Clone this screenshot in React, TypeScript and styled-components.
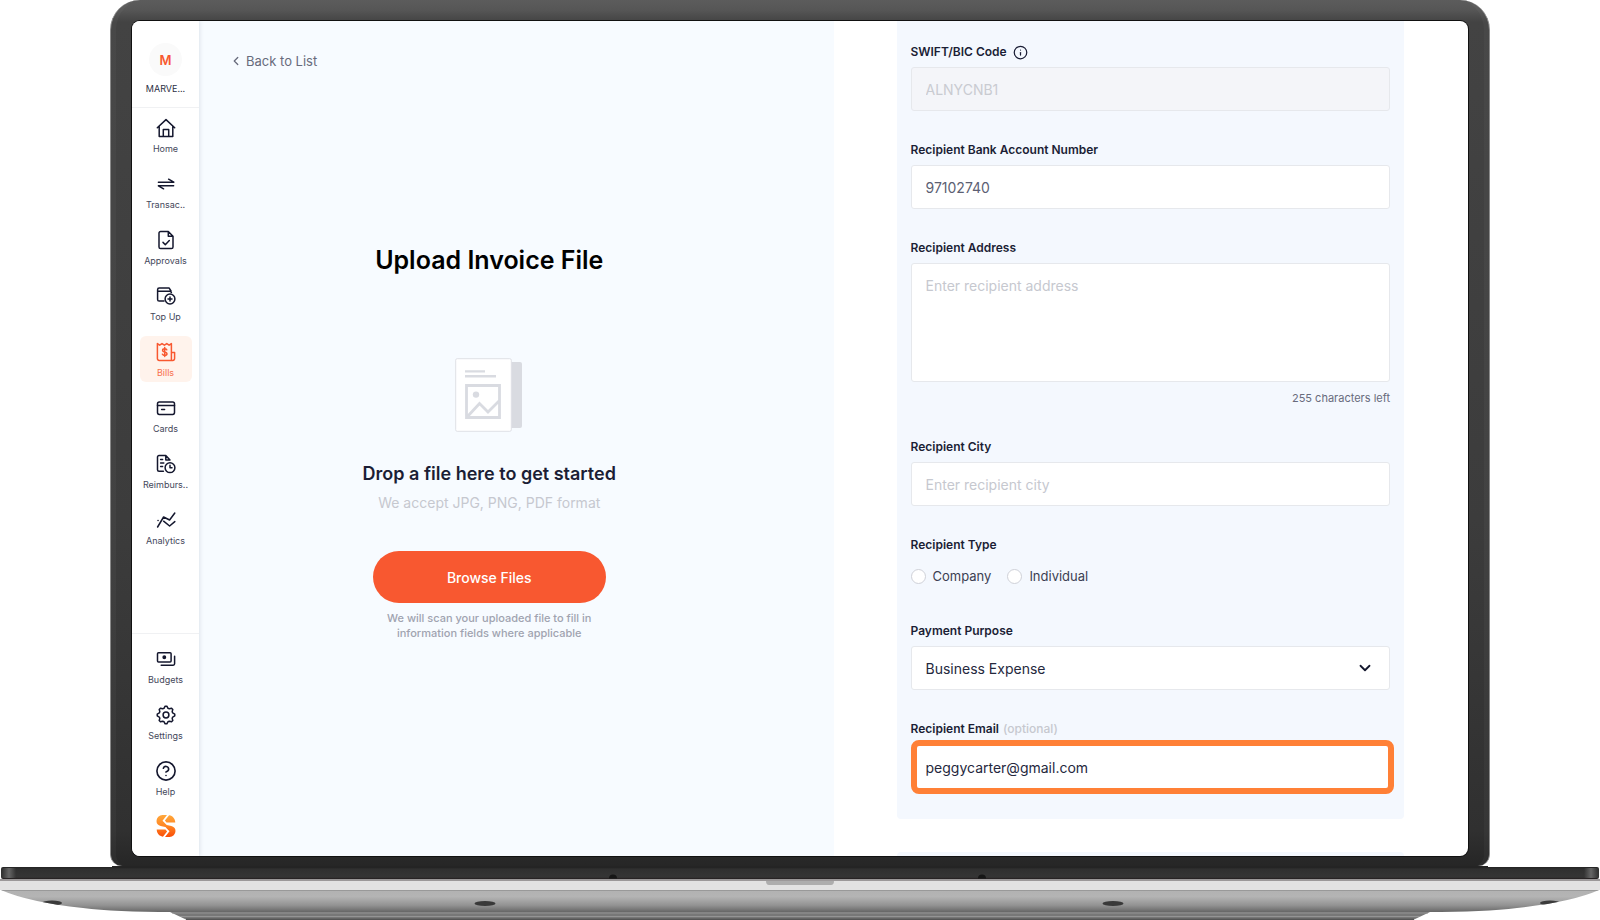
import React from "react";
import styled, { createGlobalStyle } from "styled-components";
import { ChevronDown, ChevronLeft, CircleHelp, Info } from "lucide-react";

const GlobalStyle = createGlobalStyle`
  *, *::before, *::after { box-sizing: border-box; }
  body { margin: 0; background: #fff; color: #14172e; }
  body, button, input, textarea, select { font-family: Inter, "Liberation Sans", sans-serif; }
`;

const Page = styled.div`
  display: flex;
  flex-direction: column;
  min-height: 100vh;
`;

const Lid = styled.div`
  flex: 1;
  display: flex;
  margin: 0 110px;
  padding: 21px 21px 10px;
  border: solid #8a8a8a;
  border-width: 0 1px;
  border-radius: 30px 30px 12px 12px;
  background: linear-gradient(#5c5c5c 0, #565656 10px, #434343 22px, #3c3c3c 60%, #303030 96%, #262626);
  box-shadow: inset 6px 0 0 -1px rgba(255, 255, 255, 0.03), inset -6px 0 0 -1px rgba(255, 255, 255, 0.03);
`;

const Screen = styled.div`
  flex: 1;
  display: grid;
  grid-template-columns: 67px minmax(0, 1fr) minmax(0, 1fr);
  border-radius: 8px;
  overflow: hidden;
  background: #fff;
  box-shadow: 0 0 0 1px #111;
`;

const Sidebar = styled.nav`
  display: flex;
  flex-direction: column;
  background: #fff;
  box-shadow: 1px 0 4px rgba(40, 60, 90, 0.12);
  z-index: 1;
`;

const Account = styled.div`
  display: flex;
  flex-direction: column;
  align-items: center;
  gap: 7px;
  height: 87px;
  padding-top: 22px;
  border-bottom: 1px solid #f0f1f3;
  color: #2c2f44;
  font-size: 9px;
  line-height: 12px;
`;

const Avatar = styled.span`
  display: grid;
  place-items: center;
  width: 33px;
  height: 33px;
  border-radius: 50%;
  background: #fafafa;
  color: #f85830;
  font-size: 13px;
  font-weight: 600;
`;

const NavGroup = styled.div<{ $bottom?: boolean }>`
  display: flex;
  flex-direction: column;
  align-items: center;
  gap: 10px;
  padding-top: ${(p) => (p.$bottom ? 9 : 4)}px;
  margin-top: ${(p) => (p.$bottom ? "auto" : 0)};
  border-top: ${(p) => (p.$bottom ? "1px solid #f0f1f3" : "none")};
`;

const NavItem = styled.a<{ $active?: boolean }>`
  display: flex;
  flex-direction: column;
  align-items: center;
  gap: 5px;
  width: 52px;
  height: 46px;
  padding-top: 6px;
  border-radius: 6px;
  background: ${(p) => (p.$active ? "#fff3ec" : "transparent")};
  color: ${(p) => (p.$active ? "#f85830" : "#14172e")};
  font-size: 9px;
  line-height: 12px;
  text-decoration: none;
  white-space: nowrap;
`;

const NavText = styled.span<{ $active?: boolean }>`
  color: ${(p) => (p.$active ? "#f8714c" : "#44475a")};
`;

const LogoLink = styled.a`
  display: flex;
  height: 45px;
  padding-top: 4px;
`;

const Upload = styled.section`
  display: flex;
  flex-direction: column;
  padding: 30px 30px 0;
  background: #f7fbff;
`;

const BackLink = styled.a`
  display: flex;
  align-items: center;
  gap: 3px;
  align-self: flex-start;
  color: #686b7c;
  font-size: 13px;
  line-height: 20px;
  text-decoration: none;
`;

const DropZone = styled.div`
  display: flex;
  flex-direction: column;
  align-items: center;
  margin-right: 54px;
  padding-top: 172px;
  text-align: center;
`;

const Title = styled.h1`
  margin: 0 0 81px;
  color: #000;
  font-size: 25px;
  line-height: 34px;
  font-weight: 600;
`;

const DropHeading = styled.h2`
  margin: 28px 0 5px;
  font-size: 18px;
  line-height: 28px;
  font-weight: 600;
  color: #1b1e35;
`;

const Formats = styled.p`
  margin: 0 0 38px;
  color: #c6c8cf;
  font-size: 14px;
  line-height: 20px;
`;

const BrowseButton = styled.button`
  width: 233px;
  height: 52px;
  margin-bottom: 8px;
  border: 0;
  border-radius: 26px;
  background: #f85830;
  color: #fff;
  font-size: 14px;
  font-weight: 500;
`;

const ScanNote = styled.p`
  width: 230px;
  margin: 0;
  color: #a0a3b0;
  font-size: 11px;
  line-height: 15px;
  font-weight: 500;
`;

const FormColumn = styled.form`
  display: flex;
  flex-direction: column;
  gap: 33px;
  padding: 0 64px 0 63px;
`;

const Card = styled.div`
  display: flex;
  flex-direction: column;
  gap: 30px;
  padding: 22px 14px 25px;
  border-radius: 0 0 4px 4px;
  background: #f4f8fe;
`;

const NextCard = styled.div`
  flex: 1;
  border-radius: 6px 6px 0 0;
  background: #f4f8fe;
`;

const Field = styled.div`
  display: flex;
  flex-direction: column;
  gap: 6px;
`;

const TypeField = styled.fieldset`
  display: flex;
  flex-direction: column;
  gap: 6px;
  min-width: 0;
  margin: 0;
  padding: 0;
  border: 0;
`;

const Label = styled.label`
  display: flex;
  align-items: center;
  gap: 6px;
  color: #1b1e35;
  font-size: 12px;
  line-height: 18px;
  font-weight: 600;
`;

const TypeLabel = styled(Label).attrs({ as: "legend" })`
  padding: 0;
  margin-bottom: 6px;
`;

const Optional = styled.span`
  margin-left: -2px;
  color: #c6c8cf;
  font-weight: 500;
`;

const Input = styled.input`
  width: 100%;
  height: 44px;
  padding: 0 14px;
  border: 1px solid #e6e8ec;
  border-radius: 3px;
  background: #fff;
  color: #5c5f73;
  font-size: 14px;
  &::placeholder { color: #c6c8cf; }
  &:disabled { background: #f4f5f9; color: #c9cbd1; }
`;

const EmailField = styled(Field)`
  gap: 2px;
  margin-right: -4px;
`;

const EmailInput = styled(Input)`
  height: 54px;
  padding: 0 9px;
  border: 6px solid #ff8036;
  border-radius: 8px;
  color: #25283d;
`;

const TextArea = styled.textarea`
  width: 100%;
  height: 119px;
  padding: 12px 14px;
  border: 1px solid #e6e8ec;
  border-radius: 3px;
  background: #fff;
  font-size: 14px;
  line-height: 20px;
  resize: none;
  &::placeholder { color: #c6c8cf; }
`;

const Counter = styled.span`
  align-self: flex-end;
  color: #686b7c;
  font-size: 11px;
  line-height: 20px;
`;

const Radios = styled.div`
  display: flex;
  align-items: center;
  gap: 16px;
  height: 32px;
`;

const RadioLabel = styled.label`
  display: flex;
  align-items: center;
  gap: 7px;
  color: #3c3f52;
  font-size: 13px;
  line-height: 20px;
`;

const Radio = styled.input`
  appearance: none;
  width: 15px;
  height: 15px;
  margin: 0;
  border: 1px solid #cfd1d8;
  border-radius: 50%;
  background: #fff;
  &:checked { border: 4px solid #f85830; }
`;

const SelectBox = styled.div`
  display: grid;
  align-items: center;
  > * { grid-area: 1 / 1; }
  > svg { justify-self: end; margin-right: 16px; pointer-events: none; }
`;

const Select = styled(Input).attrs({ as: "select" })`
  appearance: none;
  color: #25283d;
`;

const BaseArt = styled.svg`
  display: block;
  flex: none;
  width: 100%;
  height: 54px;
`;

const Stroke = ({ children }: { children: React.ReactNode }) => (
  <svg width="20" height="20" viewBox="0 0 20 20" fill="none" stroke="currentColor" strokeWidth="1.5" strokeLinecap="round" strokeLinejoin="round" aria-hidden="true">
    {children}
  </svg>
);

const gearPath =
  Array.from({ length: 32 }, (_, i) => {
    const radius = i % 4 < 2 ? 8.8 : 7;
    const angle = ((i - 0.5) / 32) * Math.PI * 2 - Math.PI / 2;
    return `${i ? "L" : "M"}${(10 + radius * Math.cos(angle)).toFixed(2)} ${(10 + radius * Math.sin(angle)).toFixed(2)}`;
  }).join("") + "Z";

const mainNav = [
  { label: "Home", icon: <Stroke><path d="M1.3 9.8 10 1.6l8.7 8.2M3.2 8.4v10h13.6v-10M7.3 18.2v-6.6h5.4v6.6" /></Stroke> },
  { label: "Transac..", icon: <Stroke><path d="M2.4 8.2h15.4l-5.2-3M17.6 11.8H2.4l5.2 3" /></Stroke> },
  { label: "Approvals", icon: <Stroke><path d="M12.3 1.5H4.6a1.6 1.6 0 0 0-1.6 1.6v13.8a1.6 1.6 0 0 0 1.6 1.6h10.8a1.6 1.6 0 0 0 1.6-1.6V6.2ZM12.3 1.5v4.7H17M7 12.4l2.3 2.3 4-4.2" /></Stroke> },
  { label: "Top Up", icon: <Stroke><path d="M8 15H3.2a1.6 1.6 0 0 1-1.6-1.6V3.8c0-1 .6-1.7 1.6-1.7h10l1.8 2.9M1.6 5.2h12.2a1.6 1.6 0 0 1 1.6 1.4" /><circle cx="14" cy="13" r="4.9" /><path d="M14 11v4M12 13h4" /></Stroke> },
  { label: "Bills", active: true, icon: <Stroke><path d="M15.4 18.4H3.2a1.8 1.8 0 0 1-1.8-1.8V1.6l2.3 1.6L6 1.6l2.4 1.6 2.4-1.6 2.3 1.6 2.3-1.6v16.8h1.4a1.8 1.8 0 0 0 1.8-1.8v-6h-3.2M10.8 7.8c-.5-.8-1.2-1-2.2-1-1.2 0-2 .6-2 1.6 0 2.4 4.4 1 4.4 3.4 0 1-.9 1.6-2.2 1.6-1.1 0-1.9-.4-2.4-1.2M8.7 5.6v9" /></Stroke> },
  { label: "Cards", icon: <Stroke><rect x="1.5" y="4" width="17" height="12.4" rx="1.8" /><path d="M1.5 7.6h17M5.6 11.4h3" /></Stroke> },
  { label: "Reimburs..", icon: <Stroke><path d="M7.4 17.2H3a1.5 1.5 0 0 1-1.5-1.5V3A1.5 1.5 0 0 1 3 1.5h6.8L14 6M9.8 1.5V6H14M4.6 5.4h2M4.6 9h3.2M4.6 12.6h2" /><circle cx="14" cy="13.7" r="4.9" /><path d="M14 11.2v2.6h2" /></Stroke> },
  { label: "Analytics", icon: <Stroke><path d="m1.6 17 6-10 6 3L18.8 3M7.6 11.2l6 4.8 5.2-4.4M2 10.4h.1" /></Stroke> },
];

const bottomNav = [
  { label: "Budgets", icon: <Stroke><rect x="1.5" y="3.7" width="13.6" height="9.2" rx="1" /><circle cx="8.3" cy="8.3" r="1.2" fill="currentColor" /><path d="M18.6 7.2v7.6a1.4 1.4 0 0 1-1.4 1.4H5.2" /></Stroke> },
  { label: "Settings", icon: <Stroke><path d={gearPath} /><circle cx="10" cy="10" r="2.9" /></Stroke> },
  { label: "Help", icon: <CircleHelp size={20} strokeWidth={1.8} viewBox="1 1 22 22" aria-hidden="true" /> },
];

const Logo = () => (
  <svg width="20" height="22" viewBox="0 0 19 22" aria-label="Company logo">
    <defs>
      <linearGradient id="logoFill" gradientUnits="userSpaceOnUse" x1="0" y1="0" x2="0" y2="22">
        <stop offset="0" stopColor="#ffa83c" />
        <stop offset=".5" stopColor="#ff8522" />
        <stop offset="1" stopColor="#fa4d08" />
      </linearGradient>
    </defs>
    <path
      fill="url(#logoFill)"
      d="M10.500 0H6A6 6 0 0 0 0 6c0 2.800 1.600 4.400 4.200 5L11 12.600l-.8-2.600-4.200-4.200ZM12.600.2 8.400 5.600 10 7.400h8.800C18.600 3.600 16.400.8 12.600.2ZM8.500 22H13a6 6 0 0 0 6-6c0-2.800-1.600-4.400-4.200-5L8 9.400l.8 2.600 4.200 4.200ZM6.400 21.800l4.200-5.400L9 14.600H.2C.4 18.400 2.600 21.200 6.400 21.800Z"
    />
  </svg>
);

const FileArt = () => (
  <svg width="68" height="74" viewBox="0 0 68 74" fill="none" aria-hidden="true">
    <rect x="50" y="4" width="17" height="66" rx="2" fill="#d9dbe1" />
    <rect x=".7" y=".7" width="55.6" height="72.6" rx="1.5" fill="#fff" stroke="#dfe0e6" />
    <path d="M10 13.4h20M10 18.2h31" stroke="#d9dbe1" strokeWidth="2.4" />
    <path d="M11.5 27.5h33v32h-33ZM12.5 58.500l12-13 8.500 8.500 11-11" stroke="#d9dbe1" strokeWidth="2.8" />
    <circle cx="21" cy="36.600" r="3.200" fill="#d9dbe1" />
  </svg>
);

const LaptopBase = () => (
  <BaseArt viewBox="0 0 1600 54" preserveAspectRatio="none" aria-hidden="true">
    <defs>
      <linearGradient id="deck" x1="0" y1="0" x2="0" y2="1">
        <stop offset="0" stopColor="#242424" />
        <stop offset=".2" stopColor="#303030" />
        <stop offset=".85" stopColor="#353535" />
        <stop offset="1" stopColor="#221d1e" />
      </linearGradient>
      <linearGradient id="metal" x1="0" y1="0" x2="0" y2="1">
        <stop offset="0" stopColor="#b2b2b2" />
        <stop offset=".3" stopColor="#b4b4b4" />
        <stop offset=".7" stopColor="#929292" />
        <stop offset="1" stopColor="#666" />
      </linearGradient>
      <linearGradient id="tip" x1="0" y1="0" x2="1" y2="0">
        <stop offset="0" stopColor="#666" stopOpacity="0" />
        <stop offset=".5" stopColor="#666" />
        <stop offset="1" stopColor="#666" stopOpacity="0" />
      </linearGradient>
      <clipPath id="hull">
        <path d="M1 24H1599Q1572 36 1517 42 1485 46 1427 46H173Q115 46 83 42 28 36 1 24Z" />
      </clipPath>
    </defs>
    <path d="M112 0h14v2h-14ZM1474 0h14v2h-14Z" fill="#1c1c1c" />
    <path d="M170 46H1430L1413 54H187Z" fill="#777" />
    <path d="M172 47H1428M180 50.5H1420" stroke="#949494" />
    <path d="M186 53.2H1414" stroke="#555" strokeWidth="1.6" />
    <rect x="1" y="1" width="1598" height="12" rx="2" fill="url(#deck)" />
    <path d="M112 0H1488V2H112Z" fill="#242424" />
    <rect x="2" y="2" width="14" height="10" fill="url(#tip)" />
    <rect x="1584" y="2" width="14" height="10" fill="url(#tip)" />
    <path d="M609 12.500a4 4 0 0 1 8 0ZM978 12.500a4 4 0 0 1 8 0Z" fill="#161616" />
    <rect y="13" width="1600" height="2" fill="#9b9899" />
    <rect y="15" width="1600" height="9" fill="#e2e2e2" />
    <path d="M766 15h68q0 4-3 4h-62q-3 0-3-4Z" fill="#adadad" />
    <g clipPath="url(#hull)">
      <rect y="24" width="1600" height="22" fill="url(#metal)" />
      <rect y="24" width="1600" height="1" fill="#999" />
      <ellipse cx="52" cy="37" rx="10" ry="2.5" fill="#3b3b3b" />
      <ellipse cx="1550" cy="37" rx="10" ry="2.5" fill="#3b3b3b" />
    </g>
    <ellipse cx="485" cy="37.5" rx="10.5" ry="2.6" fill="#393939" />
    <ellipse cx="1113" cy="37.5" rx="10.5" ry="2.6" fill="#393939" />
  </BaseArt>
);

export default function App() {
  return (
    <Page>
      <GlobalStyle />
      <Lid>
        <Screen>
          <Sidebar>
            <Account>
              <Avatar>M</Avatar>
              MARVE...
            </Account>
            <NavGroup>
              {mainNav.map((item) => (
                <NavItem key={item.label} href="#" $active={item.active}>
                  {item.icon}
                  <NavText $active={item.active}>{item.label}</NavText>
                </NavItem>
              ))}
            </NavGroup>
            <NavGroup $bottom>
              {bottomNav.map((item) => (
                <NavItem key={item.label} href="#">
                  {item.icon}
                  <NavText>{item.label}</NavText>
                </NavItem>
              ))}
              <LogoLink href="#"><Logo /></LogoLink>
            </NavGroup>
          </Sidebar>
          <Upload>
            <BackLink href="#">
              <ChevronLeft size={14} strokeWidth={2.2} aria-hidden="true" />
              Back to List
            </BackLink>
            <DropZone>
              <Title>Upload Invoice File</Title>
              <FileArt />
              <DropHeading>Drop a file here to get started</DropHeading>
              <Formats>We accept JPG, PNG, PDF format</Formats>
              <BrowseButton type="button">Browse Files</BrowseButton>
              <ScanNote>We will scan your uploaded file to fill in information fields where applicable</ScanNote>
            </DropZone>
          </Upload>
          <FormColumn>
            <Card>
              <Field>
                <Label htmlFor="swift">SWIFT/BIC Code <Info size={15} strokeWidth={2} aria-hidden="true" /></Label>
                <Input id="swift" defaultValue="ALNYCNB1" disabled />
              </Field>
              <Field>
                <Label htmlFor="account">Recipient Bank Account Number</Label>
                <Input id="account" defaultValue="97102740" />
              </Field>
              <Field>
                <Label htmlFor="address">Recipient Address</Label>
                <TextArea id="address" placeholder="Enter recipient address" maxLength={255} />
                <Counter>255 characters left</Counter>
              </Field>
              <Field>
                <Label htmlFor="city">Recipient City</Label>
                <Input id="city" placeholder="Enter recipient city" />
              </Field>
              <TypeField>
                <TypeLabel>Recipient Type</TypeLabel>
                <Radios>
                  <RadioLabel><Radio type="radio" name="type" value="company" />Company</RadioLabel>
                  <RadioLabel><Radio type="radio" name="type" value="individual" />Individual</RadioLabel>
                </Radios>
              </TypeField>
              <Field>
                <Label htmlFor="purpose">Payment Purpose</Label>
                <SelectBox>
                  <Select id="purpose"><option>Business Expense</option></Select>
                  <ChevronDown size={18} strokeWidth={2.4} aria-hidden="true" />
                </SelectBox>
              </Field>
              <EmailField>
                <Label htmlFor="email">Recipient Email <Optional>(optional)</Optional></Label>
                <EmailInput id="email" type="email" defaultValue="peggycarter@gmail.com" />
              </EmailField>
            </Card>
            <NextCard />
          </FormColumn>
        </Screen>
      </Lid>
      <LaptopBase />
    </Page>
  );
}
